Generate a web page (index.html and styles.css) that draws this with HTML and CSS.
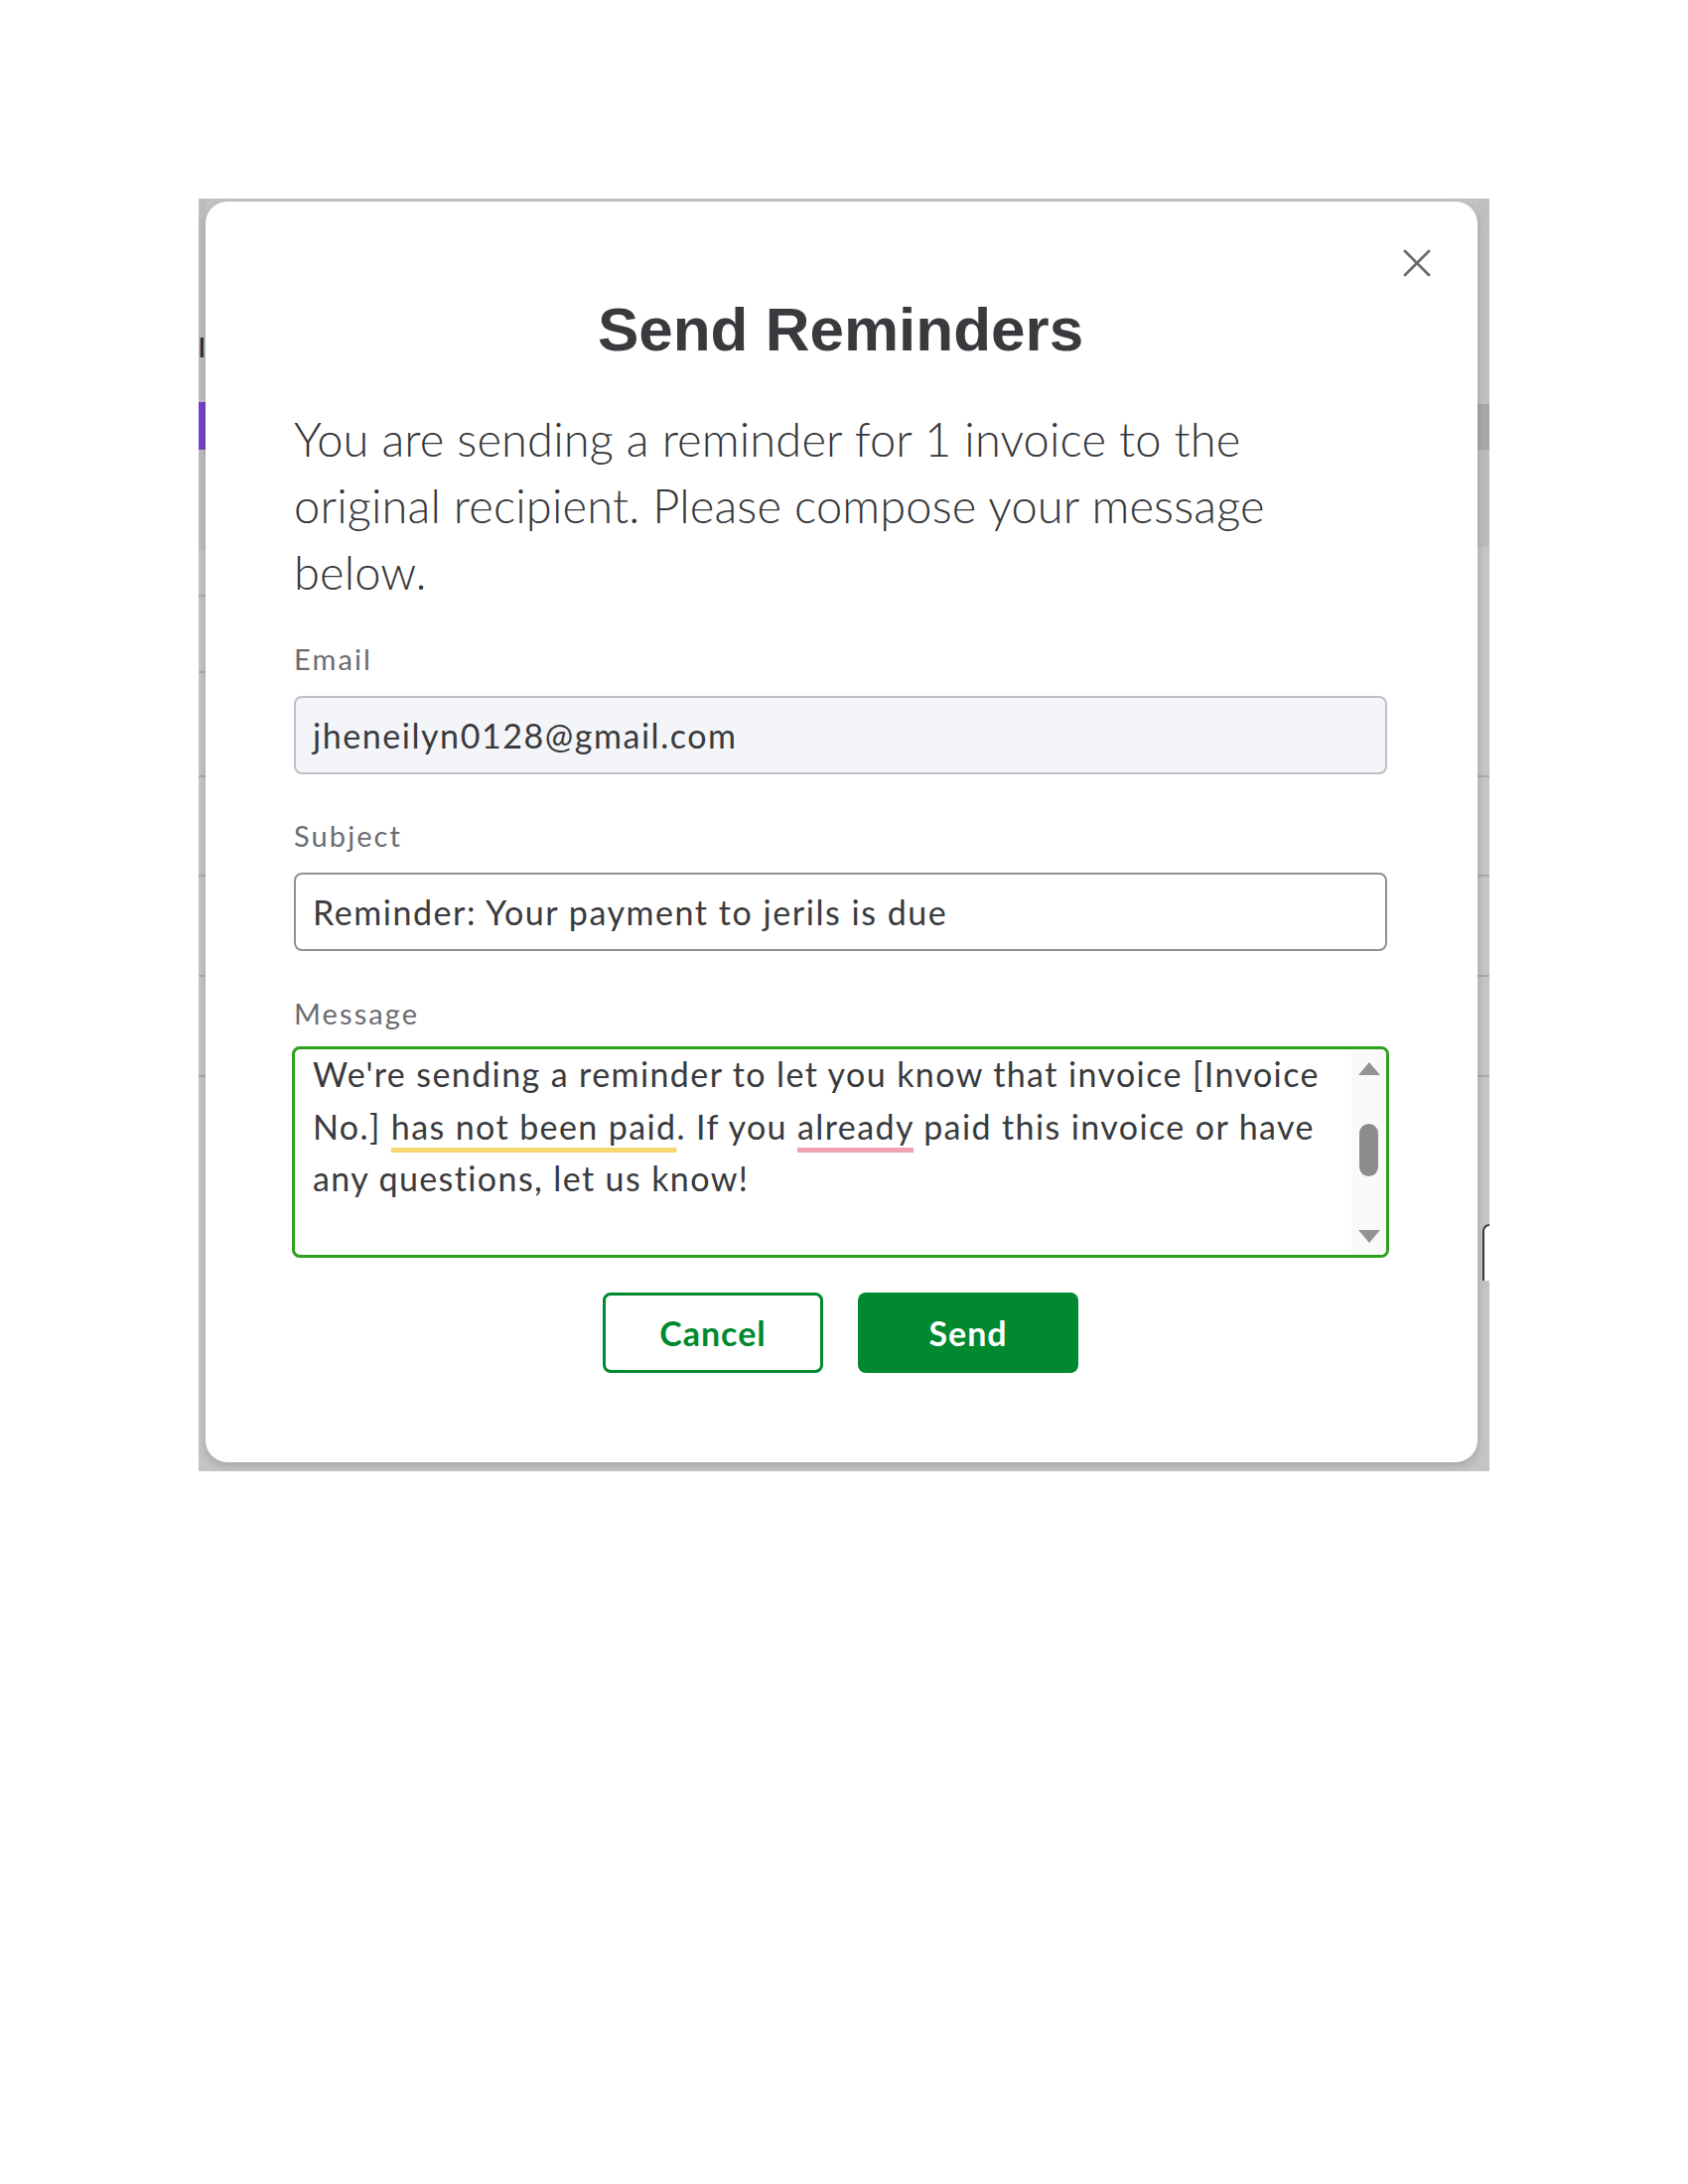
FILE: index.html
```html
<!DOCTYPE html>
<html lang="en">
<head>
<meta charset="utf-8">
<title>Send Reminders</title>
<link rel="stylesheet" href="styles.css">
</head>
<body>
<div class="page">
  <div class="stage">
    <div class="edge edge-left">
      <div class="seg seg-l1"></div>
      <div class="seg seg-frag"></div>
      <div class="seg seg-l2"></div>
      <div class="seg seg-purple"></div>
      <div class="seg seg-l3"></div>
      <div class="seg seg-l4"></div>
      <div class="seg seg-l5 tick"></div>
      <div class="seg seg-l6 tick"></div>
      <div class="seg seg-l7 tick"></div>
      <div class="seg seg-l8 tick"></div>
      <div class="seg seg-l9 tick"></div>
      <div class="seg seg-rest tick"></div>
    </div>

    <div class="modal">
      <button class="close" aria-label="Close">
        <svg width="28" height="28" viewBox="0 0 28 28"><path d="M2 2 L26 26 M26 2 L2 26" stroke="#6b6c72" stroke-width="2.8" stroke-linecap="round" fill="none"/></svg>
      </button>
      <h1 class="title">Send Reminders</h1>
      <p class="desc">You are sending a reminder for 1 invoice to the original recipient. Please compose your message below.</p>

      <div class="field field-email">
        <div class="label">Email</div>
        <div class="input input-disabled">jheneilyn0128@gmail.com</div>
      </div>

      <div class="field field-subject">
        <div class="label">Subject</div>
        <div class="input">Reminder: Your payment to jerils is due</div>
      </div>

      <div class="field field-message">
        <div class="label label-msg">Message</div>
        <div class="msg">
          <div class="msg-text">We're sending a reminder to let you know that invoice [Invoice No.] <span class="mark-grammar">has not been paid</span>. If you <span class="mark-spell">already</span> paid this invoice or have any questions, let us know!</div>
          <div class="msg-scroll">
            <div class="arrow-up"></div>
            <div class="thumb"></div>
            <div class="scroll-spacer"></div>
            <div class="arrow-down"></div>
          </div>
        </div>
      </div>

      <div class="actions">
        <button class="btn btn-secondary">Cancel</button>
        <button class="btn btn-primary">Send</button>
      </div>
    </div>

    <div class="edge edge-right">
      <div class="seg seg-r1"></div>
      <div class="seg seg-rdark"></div>
      <div class="seg seg-r2"></div>
      <div class="seg seg-r3"></div>
      <div class="seg seg-r4 tick"></div>
      <div class="seg seg-r5 tick"></div>
      <div class="seg seg-r6 tick"></div>
      <div class="seg seg-r7 tick"></div>
      <div class="seg seg-rbtn"><div class="peek"></div></div>
      <div class="seg seg-rest"></div>
    </div>
  </div>
</div>
</body>
</html>
```

FILE: styles.css
```css
* { box-sizing: border-box; }

body {
  margin: 0;
  background: #ffffff;
  font-family: Lato, "Liberation Sans", sans-serif;
}

.page {
  padding: 200px 0 0 200px;
}

.stage {
  display: flex;
  width: 1300px;
  height: 1282px;
  background: #c3c3c3;
}

/* backdrop edges (page behind overlay) */
.edge {
  display: flex;
  flex-direction: column;
  flex: none;
}
.edge-left { width: 7px; }
.edge-right { width: 12px; }

.seg { flex: none; background: #bdbdbd; }
.tick { border-top: 2px solid #a9a9a9; }

.seg-l1 { height: 140px; }
.seg-frag {
  height: 20px;
  background: linear-gradient(to right, #bdbdbd 0 1px, #c58a5c 1px 2px, #2b3550 2px 5px, #bdbdbd 5px);
}
.seg-l2 { height: 45px; }
.seg-purple { height: 48px; background: #7641c6; }
.seg-l3 { height: 101px; background: #bcbcbc; }
.seg-l4 { height: 45px; background: #c4c4c4; }
.seg-l5 { height: 77px; background: #c4c4c4; }
.seg-l6 { height: 105px; background: #c4c4c4; }
.seg-l7 { height: 100px; background: #c4c4c4; }
.seg-l8 { height: 101px; background: #c4c4c4; }
.seg-l9 { height: 101px; background: #c4c4c4; }
.seg-rest { flex: 1; background: #c4c4c4; }

.seg-r1 { height: 207px; background: #bfbfbf; }
.seg-rdark { height: 46px; background: #a5a8ab; }
.seg-r2 { height: 98px; background: #bcbcbc; }
.seg-r3 { height: 230px; background: #c4c4c4; }
.seg-r4 { height: 100px; background: #c4c4c4; }
.seg-r5 { height: 101px; background: #c4c4c4; }
.seg-r6 { height: 101px; background: #c4c4c4; }
.seg-r7 { height: 150px; background: #c4c4c4; }
.seg-rbtn {
  height: 57px;
  background: #c4c4c4;
  padding-left: 5px;
}
.peek {
  height: 100%;
  background: #ffffff;
  border-left: 2px solid #3a3a3a;
  border-top: 2px solid #3a3a3a;
  border-top-left-radius: 12px;
}

/* modal */
.modal {
  position: relative;
  flex: none;
  width: 1281px;
  margin: 3px 0 9px;
  background: #ffffff;
  border-radius: 22px;
  box-shadow: 0 3px 8px rgba(0, 0, 0, 0.16);
  padding: 94px 91px 90px 89px;
  display: flex;
  flex-direction: column;
}

.close {
  position: absolute;
  top: 48px;
  right: 47px;
  width: 28px;
  height: 28px;
  padding: 0;
  border: 0;
  background: transparent;
  display: flex;
}

.title {
  margin: 0;
  font: 700 62px/70px "Liberation Sans", Arial, sans-serif;
  color: #393a3d;
  text-align: center;
}

.desc {
  margin: 42px 0 0;
  font: 300 47px/67px Lato, sans-serif;
  letter-spacing: 0.15px;
  color: #35363a;
}

.field {
  display: flex;
  flex-direction: column;
}
.field-email { margin-top: 34px; }
.field-subject { margin-top: 42px; }
.field-message { margin-top: 43px; }

.label {
  font: 400 29px/40px Lato, sans-serif;
  letter-spacing: 2.1px;
  color: #6b6c72;
  margin-bottom: 17px;
}
.label-msg { margin-bottom: 13px; }

.input {
  height: 79px;
  border: 2px solid #8d9096;
  border-radius: 8px;
  background: #ffffff;
  padding: 0 17px;
  display: flex;
  align-items: center;
  font: 400 34px Lato, sans-serif;
  letter-spacing: 1.55px;
  color: #393a3d;
  white-space: nowrap;
}
.input-disabled {
  background: #f4f5f8;
  border-color: #bcbfc5;
}

.msg {
  height: 213px;
  margin: 0 -2px;
  border: 3px solid #2ca01c;
  border-radius: 8px;
  display: flex;
  overflow: hidden;
}
.msg-text {
  flex: 1;
  margin-top: -1px;
  padding: 0 0 0 18px;
  font: 400 34px/52.5px Lato, sans-serif;
  letter-spacing: 1.4px;
  color: #393a3d;
}
.mark-grammar {
  text-decoration: underline;
  text-decoration-color: #f8d874;
  text-decoration-thickness: 5px;
  text-underline-offset: 8px;
  text-decoration-skip-ink: none;
}
.mark-spell {
  text-decoration: underline;
  text-decoration-color: #efa2b1;
  text-decoration-thickness: 5px;
  text-underline-offset: 8px;
  text-decoration-skip-ink: none;
}

.msg-scroll {
  flex: none;
  width: 35px;
  background: #fafafa;
  display: flex;
  flex-direction: column;
  align-items: center;
  padding: 13px 0 12px;
}
.arrow-up {
  width: 0;
  height: 0;
  border-left: 11px solid transparent;
  border-right: 11px solid transparent;
  border-bottom: 13px solid #939393;
}
.thumb {
  margin-top: 49px;
  width: 19px;
  height: 53px;
  border-radius: 10px;
  background: #8c8c8c;
}
.scroll-spacer { flex: 1; }
.arrow-down {
  width: 0;
  height: 0;
  border-left: 11px solid transparent;
  border-right: 11px solid transparent;
  border-top: 13px solid #939393;
}

.actions {
  margin-top: 35px;
  display: flex;
  justify-content: center;
  gap: 35px;
}
.btn {
  width: 222px;
  height: 81px;
  border-radius: 8px;
  font: 700 34px Lato, sans-serif;
  letter-spacing: 1px;
  display: flex;
  align-items: center;
  justify-content: center;
  padding: 0;
}
.btn-secondary {
  background: #ffffff;
  color: #00892e;
  border: 3px solid #00892e;
}
.btn-primary {
  background: #00892e;
  color: #ffffff;
  border: 0;
}
```
